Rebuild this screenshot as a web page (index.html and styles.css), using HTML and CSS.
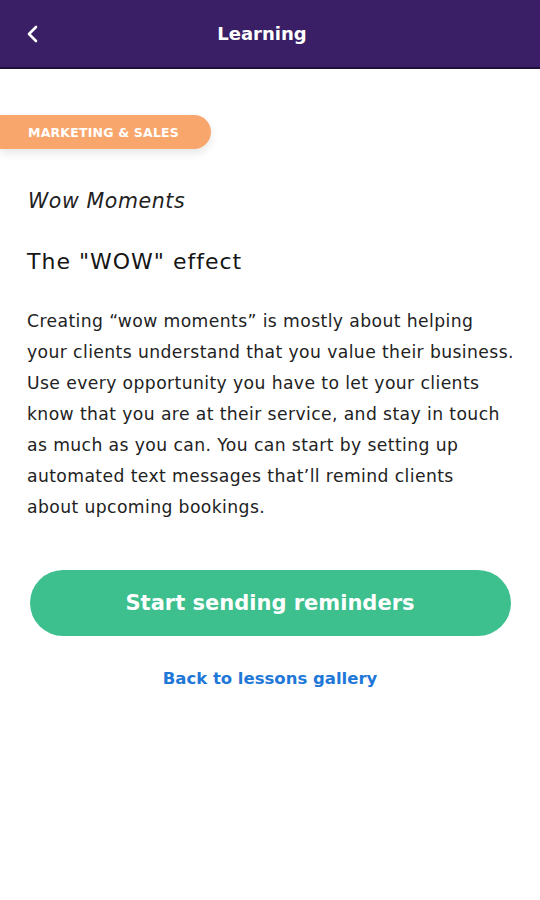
FILE: index.html
```html
<!DOCTYPE html>
<html>
<head>
<meta charset="utf-8">
<link rel="stylesheet" href="styles.css">
</head>
<body>
<header class="topbar">
  <button class="back" aria-label="Back">
    <svg width="14" height="18" viewBox="0 0 14 18"><path d="M10 2 L3 9 L10 16" fill="none" stroke="#fff" stroke-width="2.6" stroke-linecap="round" stroke-linejoin="round"/></svg>
  </button>
  <h1 class="title">Learning</h1>
</header>
<main class="content">
  <div class="badge">MARKETING &amp; SALES</div>
  <p class="kicker">Wow Moments</p>
  <h2 class="heading">The "WOW" effect</h2>
  <p class="body">Creating “wow moments” is mostly about helping<br>your clients understand that you value their business.<br>Use every opportunity you have to let your clients<br>know that you are at their service, and stay in touch<br>as much as you can. You can start by setting up<br>automated text messages that’ll remind clients<br>about upcoming bookings.</p>
  <div class="actions">
    <button class="primary">Start sending reminders</button>
    <a class="link" href="#">Back to lessons gallery</a>
  </div>
</main>
</body>
</html>
```

FILE: styles.css
```css
* { box-sizing: border-box; }
html, body { margin: 0; padding: 0; background: #fff; }
body { font-family: "DejaVu Sans", "Open Sans", sans-serif; color: #1a1a1a; width: 540px; }

.topbar {
  height: 69px;
  background: #3a1f66;
  border-bottom: 2px solid #1d0f3a;
  display: flex;
  align-items: center;
  justify-content: center;
  padding-right: 16px;
  position: relative;
}
.back {
  position: absolute;
  left: 26px;
  top: 25px;
  background: none;
  border: 0;
  padding: 0;
  width: 14px;
  height: 18px;
  display: flex;
}
.title {
  margin: 0;
  color: #fff;
  font-size: 18px;
  font-weight: 700;
}

.content { padding-top: 46px; }
.badge {
  display: inline-flex;
  align-items: center;
  height: 34px;
  width: 211px;
  padding-left: 28px;
  background: #f9a66c;
  color: #fff;
  font-size: 12.5px;
  font-weight: 700;
  border-radius: 0 17px 17px 0;
  box-shadow: 0 4px 10px rgba(0,0,0,0.10);
  letter-spacing: 0.2px;
}
.kicker {
  margin: 39px 0 0 28px;
  font-style: italic;
  font-size: 20.5px;
  letter-spacing: 0.6px;
  line-height: 26px;
  color: #222;
}
.heading {
  margin: 35px 0 0 27px;
  font-size: 22px;
  letter-spacing: 1px;
  font-weight: 500;
  line-height: 26px;
  color: #151515;
}
.body {
  margin: 31px 0 0 27px;
  font-size: 17.2px;
  letter-spacing: 0.4px;
  line-height: 31px;
  color: #222;
  white-space: nowrap;
}
.actions {
  display: flex;
  flex-direction: column;
  align-items: center;
  margin-top: 47px;
}
.primary {
  width: 481px;
  height: 66px;
  border: 0;
  border-radius: 33px;
  background: #3dc08e;
  color: #fff;
  font-family: inherit;
  font-size: 21px;
  font-weight: 700;
}
.link {
  margin-top: 33px;
  color: #1f78d8;
  font-size: 16.5px;
  font-weight: 700;
  text-decoration: none;
}
```
